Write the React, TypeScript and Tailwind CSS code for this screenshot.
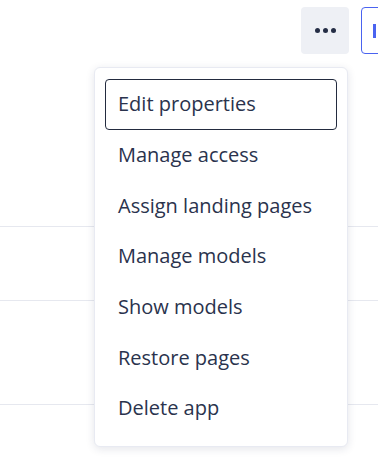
import React from 'react';

const menuItems = [
  'Edit properties',
  'Manage access',
  'Assign landing pages',
  'Manage models',
  'Show models',
  'Restore pages',
  'Delete app',
];

export default function App() {
  return (
    <div
      className="relative w-[378px] h-[469px] overflow-hidden bg-white"
      style={{ fontFamily: '"Open Sans", Lato, sans-serif' }}
    >
      {/* Toolbar */}
      <div className="flex justify-end items-start gap-3 pt-[7px] pr-0 mr-[-31px] h-[54px]">
        <button className="w-[48px] h-[47px] rounded-[4px] bg-[#eef0f5] flex items-center justify-center gap-[3px]">
          <span className="w-[5px] h-[5px] rounded-full bg-[#242d45]" />
          <span className="w-[5px] h-[5px] rounded-full bg-[#242d45]" />
          <span className="w-[5px] h-[5px] rounded-full bg-[#242d45]" />
        </button>
        <button className="w-[48px] h-[47px] rounded-[4px] border-[1.5px] border-[#4a63f0] bg-white flex items-center pl-[11px]">
          <span className="w-[3px] h-[14px] bg-[#4a63f0]" />
        </button>
      </div>

      {/* Table rows behind */}
      <div className="flex flex-col">
        <div className="h-[173px] border-b border-[#e6e8ef]" />
        <div className="h-[74px] border-b border-[#e6e8ef]" />
        <div className="h-[104px] border-b border-[#e6e8ef]" />
      </div>

      {/* Dropdown menu */}
      <div className="absolute left-[94px] top-[67px] w-[254px] h-[380px] bg-white rounded-[6px] border border-[#e8eaf2] shadow-[0_2px_8px_rgba(30,40,80,0.12)] px-[10px] pt-[11px]">
        {menuItems.map((item, i) => (
          <div
            key={item}
            className={`h-[50.7px] flex items-center pl-[12px] text-[20px] text-[#2a334d] rounded-[4px] ${
              i === 0 ? 'border border-[#232b3f]' : 'border border-transparent'
            }`}
          >
            {item}
          </div>
        ))}
      </div>
    </div>
  );
}
